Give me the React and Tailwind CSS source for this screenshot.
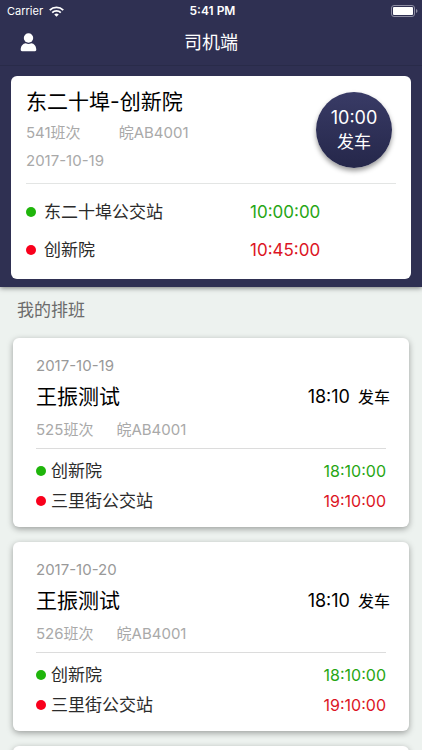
import React from 'react';

const schedules = [
  { id: 1, date: '2017-10-19', driver: '王振测试', trip: '525班次', plate: '皖AB4001', start: '18:10' },
  { id: 2, date: '2017-10-20', driver: '王振测试', trip: '526班次', plate: '皖AB4001', start: '18:10' },
];

function StatusBar() {
  return (
    <div className="grid grid-cols-3 items-center h-[22px] pl-[7px] pr-1 text-[11px]">
      <div className="flex items-center gap-[6px]">
        <span>Carrier</span>
        <svg className="w-[15px] h-[11px]" viewBox="0 0 14 10" fill="none" stroke="currentColor" strokeWidth="1.7">
          <path d="M0.7 3.7a9 9 0 0 1 12.6 0" />
          <path d="M3 6.1a5.7 5.7 0 0 1 8 0" />
          <path d="M7 10L4.9 7.9a3 3 0 0 1 4.2 0z" fill="currentColor" stroke="none" />
        </svg>
      </div>
      <span className="text-center text-xs font-semibold">5:41 PM</span>
      <svg className="justify-self-end w-[27px] h-3" viewBox="0 0 27 12">
        <rect x="0.5" y="0.5" width="23" height="11" rx="2.5" fill="none" stroke="#8d8da3" />
        <rect x="2" y="2" width="20" height="8" rx="1" fill="#fff" />
        <path d="M25 4v4c2-.8 2-3.2 0-4z" fill="#8d8da3" />
      </svg>
    </div>
  );
}

function NavBar() {
  return (
    <div className="grid grid-cols-3 items-center h-11 px-5 pb-[2px] border-b border-[#292b49]">
      <button type="button" aria-label="个人中心" className="justify-self-start">
        <svg className="w-[17px] h-[19px]" viewBox="0 0 17 19" fill="currentColor">
          <circle cx="8.5" cy="5" r="4.7" />
          <path d="M.7 16.8c0-4 2.3-6.3 5-6.6 1.8.9 3.8.9 5.600 0 2.700.3 5 2.600 5 6.600 0 .9-.5 1.400-1.300 1.400H2c-.8 0-1.300-.5-1.300-1.400z" />
        </svg>
      </button>
      <h1 className="text-center text-lg">司机端</h1>
    </div>
  );
}

function Dot({ className }) {
  return <span className={`w-[10px] h-[10px] shrink-0 rounded-full ${className}`} />;
}

function CurrentTrip() {
  return (
    <section className="mx-[11px] mt-[10px] mb-2 px-[15px] pt-[10px] pb-[17px] rounded-md bg-white text-black">
      <div className="flex justify-between pb-[10px] border-b border-[#e3e5e4]">
        <div>
          <h2 className="text-[21px] leading-[31px]">东二十埠-创新院</h2>
          <p className="flex gap-[38px] mt-1 text-[15px] leading-6 text-[#a9a9a9]">
            <span>541班次</span>
            <span>皖AB4001</span>
          </p>
          <p className="mt-1 text-[15px] leading-6 text-[#a9a9a9]">2017-10-19</p>
        </div>
        <button
          type="button"
          className="flex flex-col items-center justify-center w-[76px] h-[76px] mt-[6px] mr-1 rounded-full bg-gradient-to-b from-[#393b66] to-[#25274a] text-white text-lg leading-6 shadow-[0_3px_5px_rgba(0,0,0,0.4)]"
        >
          <span>10:00</span>
          <span className="text-[17px]">发车</span>
        </button>
      </div>
      <div className="grid grid-cols-[1fr_146px] gap-y-[14px] pt-4 text-[17px] leading-6 text-[#2b2b2b]">
        <div className="flex items-center gap-2"><Dot className="bg-[#1fb50b]" />东二十埠公交站</div>
        <span className="text-[#27a614]">10:00:00</span>
        <div className="flex items-center gap-2"><Dot className="bg-[#f9001c]" />创新院</div>
        <span className="text-[#dc1424]">10:45:00</span>
      </div>
    </section>
  );
}

function ScheduleCard({ item }) {
  return (
    <li className="px-[23px] pt-4 pb-[14px] rounded-md bg-white shadow-[0_2px_6px_rgba(0,0,0,0.35)]">
      <p className="text-[15px] leading-6 text-[#999]">{item.date}</p>
      <div className="flex items-center justify-between mt-[3px] -mr-1 text-black">
        <h3 className="text-[21px] leading-[32px]">{item.driver}</h3>
        <p className="flex items-center gap-2 text-base">
          <span className="text-lg">{item.start}</span>发车
        </p>
      </div>
      <p className="flex gap-[23px] mt-[5px] pb-[6px] border-b border-[#dcdcdc] text-[15px] leading-6 text-[#a9a9a9]">
        <span>{item.trip}</span>
        <span>{item.plate}</span>
      </p>
      <div className="flex flex-col gap-[6px] pt-[10px] text-[17px] leading-6 text-[#2b2b2b]">
        <div className="flex items-center justify-between">
          <span className="flex items-center gap-[5px]"><Dot className="bg-[#1fb50b]" />创新院</span>
          <span className="text-base leading-6 text-[#27a614]">18:10:00</span>
        </div>
        <div className="flex items-center justify-between">
          <span className="flex items-center gap-[5px]"><Dot className="bg-[#f9001c]" />三里街公交站</span>
          <span className="text-base leading-6 text-[#dc1424]">19:10:00</span>
        </div>
      </div>
    </li>
  );
}

function App() {
  return (
    <div
      lang="zh-CN"
      className="flex flex-col h-screen overflow-hidden bg-[#edf2ef] font-['Inter','Noto_Sans_CJK_SC',sans-serif]"
    >
      <header className="relative z-10 shrink-0 flow-root bg-[#2f3052] text-white shadow-[0_1px_5px_rgba(0,0,0,0.5)]">
        <StatusBar />
        <NavBar />
        <CurrentTrip />
      </header>
      <main className="flex-1 min-h-0 overflow-y-auto [scrollbar-width:none]">
        <h2 className="px-[17px] pt-[9px] text-[17px] leading-7 text-[#6b6b6b]">我的排班</h2>
        <ul className="flex flex-col gap-[15px] px-[13px] pt-[14px] pb-4">
          {schedules.map((item) => (
            <ScheduleCard key={item.id} item={item} />
          ))}
          <li aria-hidden="true" className="h-48 rounded-md bg-white shadow-[0_2px_6px_rgba(0,0,0,0.35)]" />
        </ul>
      </main>
    </div>
  );
}

export default App;
